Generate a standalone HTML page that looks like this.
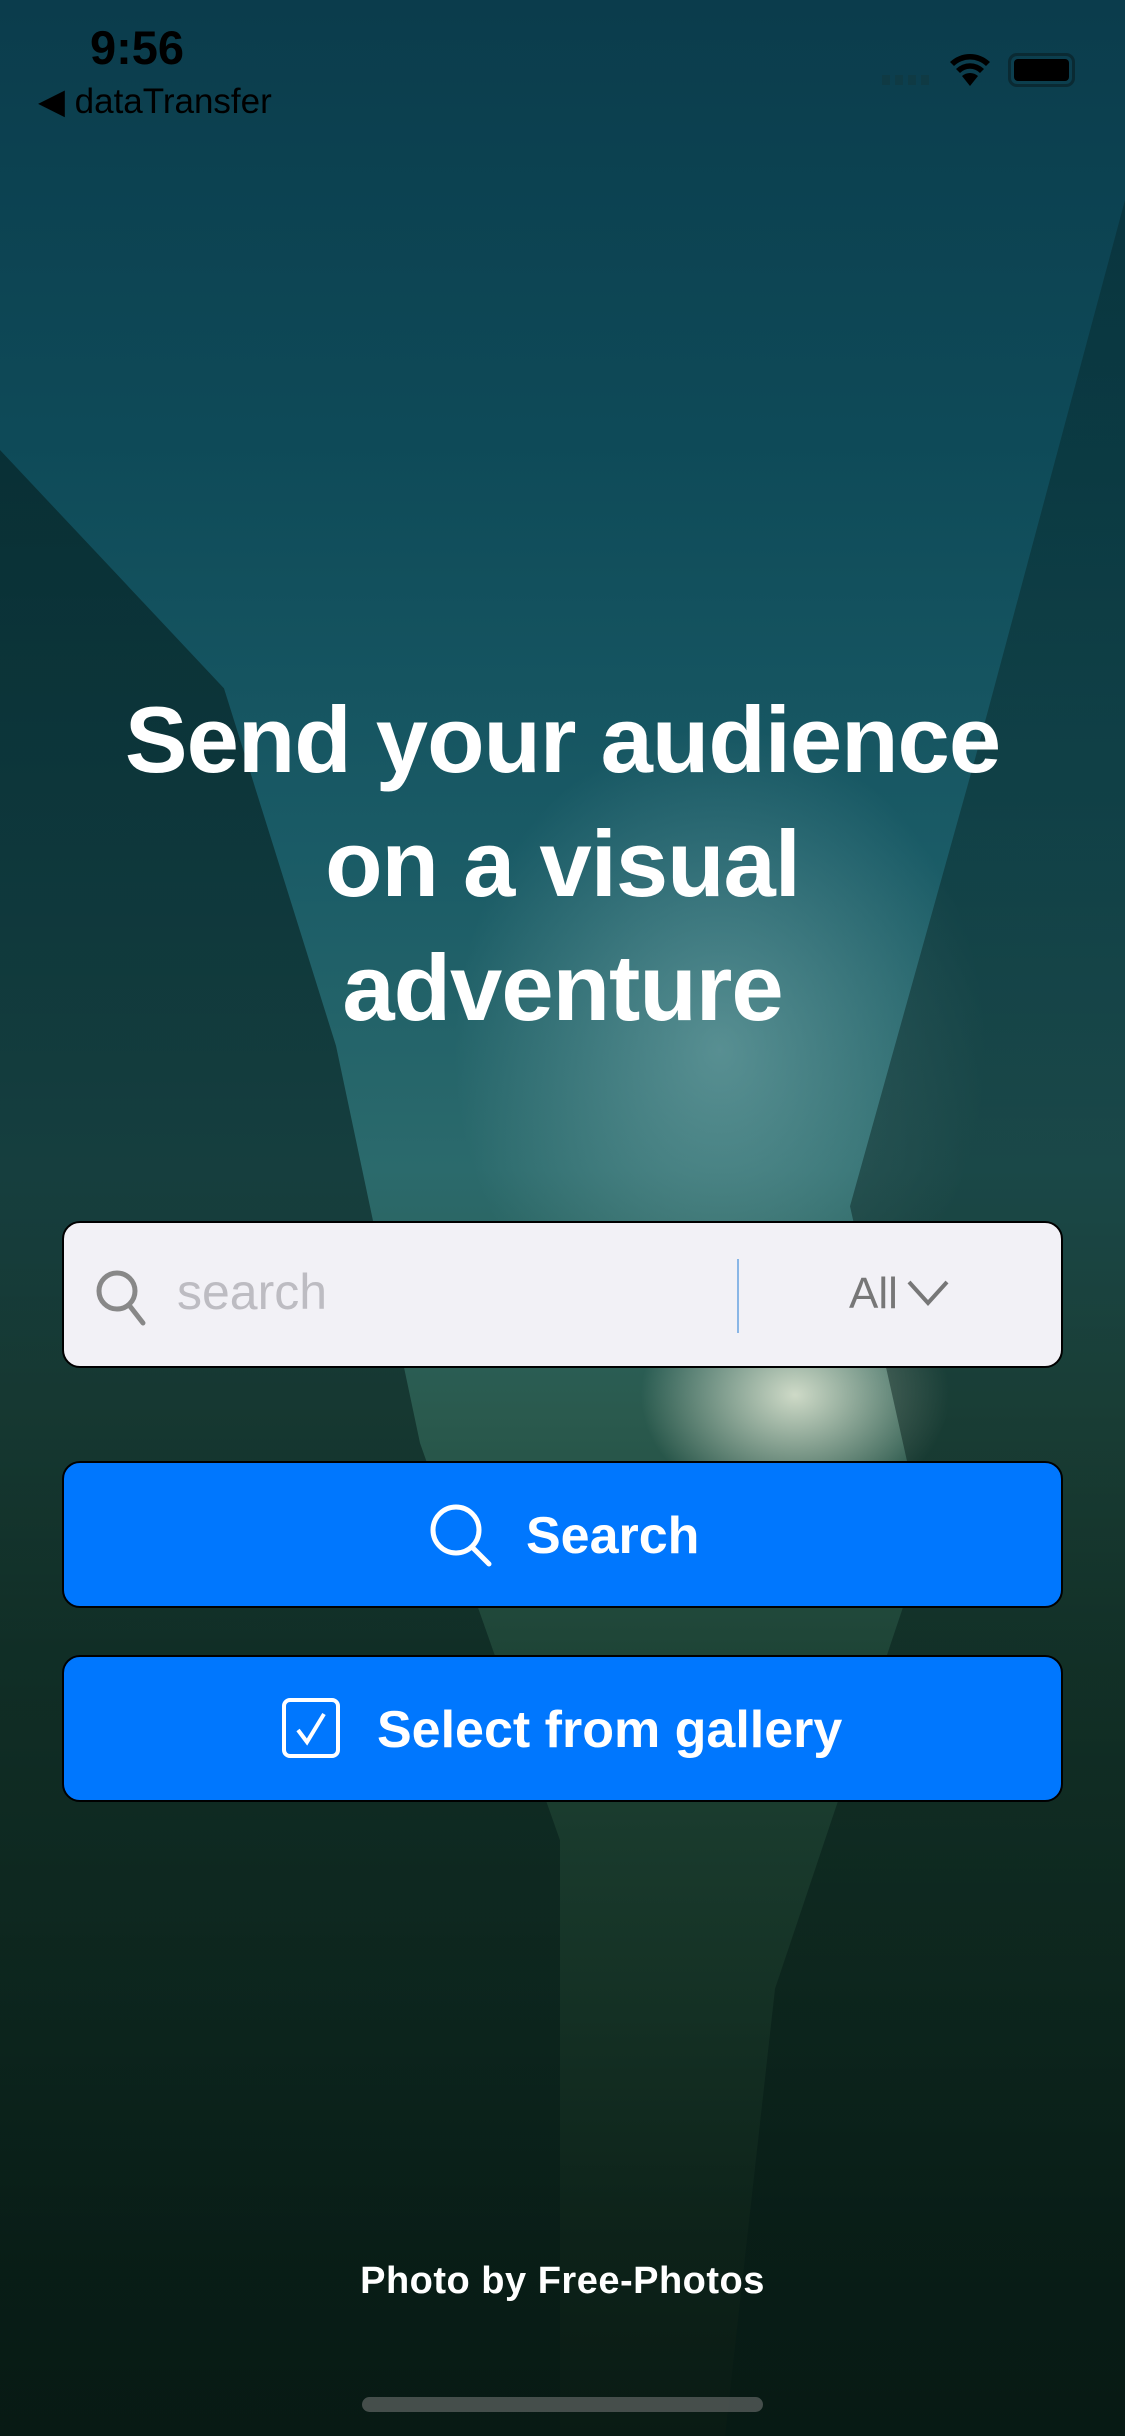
<!DOCTYPE html>
<html><head><meta charset="utf-8"><style>
*{margin:0;padding:0;box-sizing:border-box}
html,body{width:1125px;height:2436px;overflow:hidden}
body{position:relative;font-family:"Liberation Sans",sans-serif;
background:
radial-gradient(ellipse 220px 170px at 795px 1395px,rgba(235,240,220,.85),rgba(200,220,200,0) 70%),
radial-gradient(ellipse 380px 460px at 720px 1050px,rgba(150,195,195,.45),rgba(120,170,170,0) 70%),
linear-gradient(180deg,#0b3c4c 0%,#0e4a58 18%,#1a5b66 35%,#2b6a6c 48%,#2a5a4e 58%,#1e4436 68%,#163427 80%,#0d2219 92%,#0a1b14 100%);}
.l{position:absolute;left:0;top:450px;width:560px;height:1986px;background:linear-gradient(180deg,rgba(5,30,30,.6),rgba(5,25,20,.5));clip-path:polygon(0 0,40% 12%,60% 30%,75% 50%,100% 70%,100% 100%,0 100%)}
.r{position:absolute;right:0;top:200px;width:500px;height:2236px;background:linear-gradient(180deg,rgba(5,30,30,.35),rgba(5,25,20,.55));clip-path:polygon(100% 0,70% 25%,45% 45%,60% 60%,30% 80%,20% 100%,100% 100%)}
.t{position:absolute;color:#000}
h1{position:absolute;left:0;width:1125px;top:678px;text-align:center;color:#fff;font-size:94px;font-weight:bold;line-height:124px;letter-spacing:-1px}
.box{position:absolute;left:62px;width:1001px;border:2px solid #000;border-radius:18px}
.sb{top:1221px;height:147px;background:#f2f1f6}
.btn{background:#0077fe;height:147px;color:#fff;font-size:52px;font-weight:bold}
</style></head><body>
<div class="l"></div><div class="r"></div>
<div class="t" style="left:90px;top:20px;font-size:47px;font-weight:bold">9:56</div>
<div class="t" style="left:38px;top:82px;font-size:35px">◀ dataTransfer</div>
<div style="position:absolute;left:882px;top:75px;width:50px;height:10px;background:repeating-linear-gradient(90deg,#0f3a44 0 8px,transparent 8px 13px)"></div>
<svg style="position:absolute;left:948px;top:52px" width="44" height="36" viewBox="0 0 44 36"><path d="M22 34 L14 24 A12 12 0 0 1 30 24 Z M8 17 A20 20 0 0 1 36 17 L32 21 A14 14 0 0 0 12 21Z M2 10 A29 29 0 0 1 42 10 L38 14 A23 23 0 0 0 6 14Z" fill="#000"/></svg>
<div style="position:absolute;left:1008px;top:53px;width:67px;height:34px;border:3px solid #0a2a33;border-radius:9px;padding:3px"><div style="width:100%;height:100%;background:#000;border-radius:4px"></div></div>
<h1>Send your audience<br>on a visual<br>adventure</h1>
<div class="box sb">
<svg style="position:absolute;left:31px;top:46px" width="52" height="58" viewBox="0 0 52 58"><circle cx="22" cy="22" r="18" fill="none" stroke="#888" stroke-width="5"/><path d="M34 36 L48 54" stroke="#888" stroke-width="5" stroke-linecap="round"/></svg>
<div style="position:absolute;left:113px;top:40px;font-size:50px;color:#bdbcc2">search</div>
<div style="position:absolute;left:673px;top:36px;width:2px;height:74px;background:#8ab6e6"></div>
<div style="position:absolute;left:785px;top:46px;font-size:44px;color:#777">All</div>
<svg style="position:absolute;left:842px;top:56px" width="44" height="28" viewBox="0 0 44 28"><path d="M3 3 L22 24 L41 3" fill="none" stroke="#777" stroke-width="4"/></svg>
</div>
<div class="box btn" style="top:1461px">
<svg style="position:absolute;left:365px;top:40px" width="64" height="64" viewBox="0 0 64 64"><circle cx="27" cy="27" r="23" fill="none" stroke="#fff" stroke-width="5"/><path d="M43 44 L60 61" stroke="#fff" stroke-width="5" stroke-linecap="round"/></svg>
<div style="position:absolute;left:462px;top:43px">Search</div>
</div>
<div class="box btn" style="top:1655px">
<div style="position:absolute;left:218px;top:41px;width:58px;height:60px;border:4px solid #fff;border-radius:8px"></div>
<svg style="position:absolute;left:218px;top:41px" width="58" height="60" viewBox="0 0 58 60"><path d="M16 32 L25 44 L42 16" fill="none" stroke="#fff" stroke-width="4"/></svg>
<div style="position:absolute;left:313px;top:43px">Select from gallery</div>
</div>
<div style="position:absolute;left:0;width:1125px;top:2260px;text-align:center;color:#fff;font-size:38px;font-weight:bold;letter-spacing:.5px">Photo by Free-Photos</div>
<div style="position:absolute;left:362px;top:2397px;width:401px;height:15px;border-radius:8px;background:rgba(120,120,120,.55)"></div>
</body></html>
